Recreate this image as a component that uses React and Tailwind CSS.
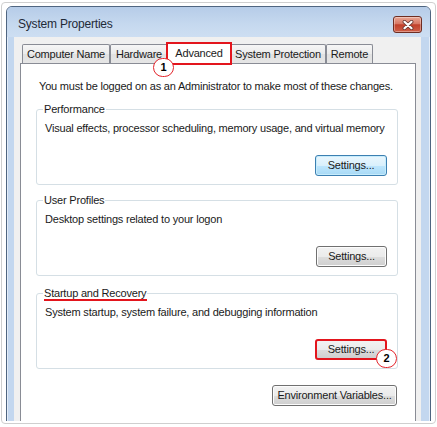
import React from "react";

function Badge({ n, className }) {
  return (
    <div
      className={
        "absolute z-20 w-[21px] h-[19px] rounded-full bg-white border-[1.5px] border-[#e3242b] flex items-center justify-center text-[11px] font-bold text-black leading-none tracking-normal " +
        className
      }
    >
      {n}
    </div>
  );
}

function Btn({ children, className = "", variant = "normal" }) {
  const look =
    variant === "default"
      ? "border-[#3c7fb1] bg-[linear-gradient(#eaf6fd,#d9f0fc_50%,#bee6fd_51%,#a7d9f5)] shadow-[inset_0_0_0_1px_#c6ecfc]"
      : variant === "red"
      ? "border-2 border-[#e3151d] bg-[linear-gradient(#f2f2f2,#ebebeb_50%,#dddddd_51%,#cfcfcf)]"
      : "border-[#707070] bg-[linear-gradient(#f2f2f2,#ebebeb_50%,#dddddd_51%,#cfcfcf)] shadow-[inset_0_0_0_1px_#fcfcfc]";
  return (
    <div
      className={
        "relative h-[21px] border rounded-[3px] flex items-center justify-center whitespace-nowrap text-[#1a1a1a] " +
        look +
        " " +
        className
      }
    >
      {children}
    </div>
  );
}

function GroupBox({ title, desc, children, className = "" }) {
  return (
    <fieldset
      className={
        "border border-[#d5dfe5] rounded-[3px] pl-[8px] pr-[10px] pb-[8px] " + className
      }
    >
      <legend className="ml-[-2px] px-[1px] leading-[14px]">{title}</legend>
      <div className="pt-[5px] whitespace-nowrap">{desc}</div>
      <div className="flex justify-end mt-[19px]">{children}</div>
    </fieldset>
  );
}

function Tab({ children, w }) {
  return (
    <div
      className={
        "h-[19px] border border-b-0 border-[#898c95] rounded-t-[2px] bg-[linear-gradient(#f6f6f6,#ebebeb_50%,#e1e1e1_51%,#e6e6e6)] flex items-center justify-center whitespace-nowrap text-[#1a1a1a] " +
        w
      }
    >
      {children}
    </div>
  );
}

export default function App() {
  return (
    <div className="w-[437px] h-[427px] bg-white pt-[2px] pl-[1px] font-['Liberation_Sans',Arial,sans-serif] text-[11px] tracking-[-0.2px] leading-[15px] text-[#1a1a1a]">
      <div className="w-[435px] h-[422px] border border-[#cfcfcf] rounded-[4px] pt-[3px] pl-[4px] pr-[4px] pb-[2px]">
        <div className="h-full overflow-hidden">
          <div className="w-[425px] h-[450px] border border-[#4f6580] rounded-t-[6px] bg-[#c3d7ef] shadow-[inset_0_0_0_1px_rgba(255,255,255,0.55)] flex flex-col">
            {/* title bar */}
            <div className="h-[30px] shrink-0 flex items-start justify-between pl-[11px] pr-[8px] rounded-t-[5px] bg-[linear-gradient(#b6cce8,#c6d9ef_60%,#cddef2)]">
              <span className="mt-[10px] text-[12px] text-[#1f2a38]">System Properties</span>
              <div className="mt-[9px] w-[29px] h-[17px] rounded-[3px] border border-[#6e2d22] bg-[linear-gradient(#eaa796,#d77763_45%,#c1402a_52%,#cf5f48)] shadow-[inset_0_0_0_1px_rgba(255,255,255,0.35)] flex items-center justify-center">
                <svg width="12" height="10" viewBox="0 0 12 10">
                  <path d="M2.5 1.8 L9.5 8.2 M9.5 1.8 L2.5 8.2" stroke="#6b3a33" strokeWidth="3.8" strokeLinecap="round" />
                  <path d="M2.5 1.8 L9.5 8.2 M9.5 1.8 L2.5 8.2" stroke="#ffffff" strokeWidth="2.2" strokeLinecap="round" />
                </svg>
              </div>
            </div>
            {/* client area */}
            <div className="flex-1 ml-[7px] mr-[9px] bg-[#f0f0f0] pl-[6px] pr-[5px] pt-[5px]">
              {/* tabs */}
              <div className="h-[21px] flex items-end pl-[2px]">
                <Tab w="w-[88px]">Computer Name</Tab>
                <Tab w="w-[58px]">Hardware</Tab>
                <div className="relative z-10 w-[66px] h-[22px] -mx-[2px] mb-[-1px] bg-white border border-b-0 border-[#898c95] rounded-t-[2px] flex items-center justify-center pb-[1px]">
                  Advanced
                  <div className="absolute -inset-px border-2 border-[#e3151d]" />
                  <Badge n="1" className="left-[-14px] top-[15px]" />
                </div>
                <Tab w="w-[96px]">System Protection</Tab>
                <Tab w="w-[47px]">Remote</Tab>
              </div>
              {/* panel */}
              <div className="h-[400px] bg-white border border-[#898c95] pt-[15px] pl-[15px] pr-[17px] flex flex-col">
                <div className="pl-[3px] whitespace-nowrap">
                  You must be logged on as an Administrator to make most of these changes.
                </div>
                <GroupBox
                  className="mt-[8px]"
                  title="Performance"
                  desc="Visual effects, processor scheduling, memory usage, and virtual memory"
                >
                  <Btn variant="default" className="w-[72px]">Settings...</Btn>
                </GroupBox>
                <GroupBox
                  className="mt-[8px]"
                  title="User Profiles"
                  desc="Desktop settings related to your logon"
                >
                  <Btn className="w-[71px]">Settings...</Btn>
                </GroupBox>
                <GroupBox
                  className="mt-[10px]"
                  title={
                    <span className="relative">
                      Startup and Recovery
                      <span className="absolute left-0 right-[-1px] top-[12px] h-[2px] bg-[#e3151d]" />
                    </span>
                  }
                  desc="System startup, system failure, and debugging information"
                >
                  <Btn variant="red" className="w-[72px]">
                    Settings...
                    <Badge n="2" className="right-[-12px] bottom-[-10px]" />
                  </Btn>
                </GroupBox>
                <div className="flex justify-end mt-[16px] mr-[1px]">
                  <Btn className="w-[125px]">Environment Variables...</Btn>
                </div>
              </div>
            </div>
          </div>
        </div>
      </div>
    </div>
  );
}
